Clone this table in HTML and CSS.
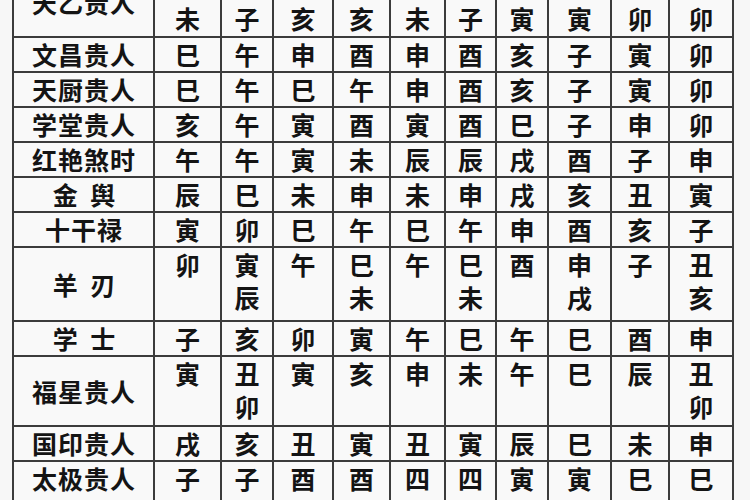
FILE: index.html
```html
<!DOCTYPE html>
<html lang="zh-CN">
<head>
<meta charset="utf-8">
<title>神煞表</title>
<link rel="stylesheet" href="styles.css">
</head>
<body>
<div class="page">
<table class="grid">
  <colgroup>
    <col class="c-label">
    <col class="c1"><col class="c2"><col class="c3"><col class="c4"><col class="c5">
    <col class="c6"><col class="c7"><col class="c8"><col class="c9"><col class="c10">
  </colgroup>
  <tbody>
    <tr class="tall first">
      <th>天乙贵人</th>
      <td>未</td><td>子</td><td>亥</td><td>亥</td><td>未</td><td>子</td><td>寅</td><td>寅</td><td>卯</td><td>卯</td>
    </tr>
    <tr class="plus">
      <th>文昌贵人</th>
      <td>巳</td><td>午</td><td>申</td><td>酉</td><td>申</td><td>酉</td><td>亥</td><td>子</td><td>寅</td><td>卯</td>
    </tr>
    <tr>
      <th>天厨贵人</th>
      <td>巳</td><td>午</td><td>巳</td><td>午</td><td>申</td><td>酉</td><td>亥</td><td>子</td><td>寅</td><td>卯</td>
    </tr>
    <tr>
      <th>学堂贵人</th>
      <td>亥</td><td>午</td><td>寅</td><td>酉</td><td>寅</td><td>酉</td><td>巳</td><td>子</td><td>申</td><td>卯</td>
    </tr>
    <tr class="plus">
      <th>红艳煞时</th>
      <td>午</td><td>午</td><td>寅</td><td>未</td><td>辰</td><td>辰</td><td>戌</td><td>酉</td><td>子</td><td>申</td>
    </tr>
    <tr class="short">
      <th class="spaced">金&ensp;舆</th>
      <td>辰</td><td>巳</td><td>未</td><td>申</td><td>未</td><td>申</td><td>戌</td><td>亥</td><td>丑</td><td>寅</td>
    </tr>
    <tr>
      <th>十干禄</th>
      <td>寅</td><td>卯</td><td>巳</td><td>午</td><td>巳</td><td>午</td><td>申</td><td>酉</td><td>亥</td><td>子</td>
    </tr>
    <tr class="tall big">
      <th class="spaced">羊&ensp;刃</th>
      <td>卯</td><td>寅<br>辰</td><td>午</td><td>巳<br>未</td><td>午</td><td>巳<br>未</td><td>酉</td><td>申<br>戌</td><td>子</td><td>丑<br>亥</td>
    </tr>
    <tr>
      <th class="spaced">学&ensp;士</th>
      <td>子</td><td>亥</td><td>卯</td><td>寅</td><td>午</td><td>巳</td><td>午</td><td>巳</td><td>酉</td><td>申</td>
    </tr>
    <tr class="tall">
      <th>福星贵人</th>
      <td>寅</td><td>丑<br>卯</td><td>寅</td><td>亥</td><td>申</td><td>未</td><td>午</td><td>巳</td><td>辰</td><td>丑<br>卯</td>
    </tr>
    <tr>
      <th>国印贵人</th>
      <td>戌</td><td>亥</td><td>丑</td><td>寅</td><td>丑</td><td>寅</td><td>辰</td><td>巳</td><td>未</td><td>申</td>
    </tr>
    <tr class="last">
      <th>太极贵人</th>
      <td>子</td><td>子</td><td>酉</td><td>酉</td><td>四</td><td>四</td><td>寅</td><td>寅</td><td>巳</td><td>巳</td>
    </tr>
  </tbody>
</table>
</div>
</body>
</html>
```

FILE: styles.css
```css
html, body {
  margin: 0;
  padding: 0;
  overflow: hidden;
}

body {
  width: 750px;
  height: 500px;
  background: #f7f7f7;
  font-family: "Noto Sans CJK SC", "Noto Sans CJK JP", sans-serif;
  color: #141414;
}

.page {
  padding-left: 12px;
  margin-top: -34px;
}

.grid {
  border-collapse: collapse;
  table-layout: fixed;
  width: 720px;
  background: #f9f9f9;
}

.c-label { width: 141px; }
.c1 { width: 67px; }
.c2 { width: 52px; }
.c3 { width: 60px; }
.c4 { width: 57px; }
.c5 { width: 55px; }
.c6 { width: 51px; }
.c7 { width: 52px; }
.c8 { width: 63px; }
.c9 { width: 58px; }
.c10 { width: 64px; }

.grid th,
.grid td {
  border: 2px solid #3c3c3c;
  padding: 0;
  height: 32px;
  line-height: 33px;
  font-size: 25px;
  font-weight: 700;
  text-align: center;
}

.grid th {
  vertical-align: middle;
  letter-spacing: 1px;
  padding-left: 1px;
}

.grid th.spaced {
  letter-spacing: 0;
}

.grid td {
  vertical-align: top;
}

.grid tr.plus th,
.grid tr.plus td {
  height: 33px;
}

.grid tr.short th,
.grid tr.short td {
  height: 31px;
}

.grid tr.tall th,
.grid tr.tall td {
  height: 68px;
}

.grid tr.tall.big th,
.grid tr.tall.big td {
  height: 72px;
}

.grid tr.first td {
  padding-top: 34px;
  height: 34px;
}

.grid tr.first th,
.grid tr.first td {
  border-top-color: transparent;
}

.grid tr.last th {
  vertical-align: top;
}

.grid tr.last th,
.grid tr.last td {
  height: 44px;
}
```
